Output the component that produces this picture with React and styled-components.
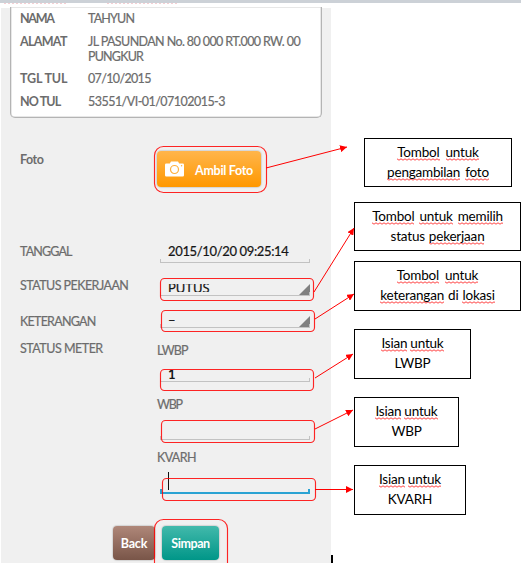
import React from "react";
import styled, { createGlobalStyle } from "styled-components";

const squiggle =
  "url(\"data:image/svg+xml,%3Csvg xmlns='http://www.w3.org/2000/svg' width='4' height='3'%3E%3Cpath d='M0 .8L2 2.2L4 .8' fill='none' stroke='%23ff3030' stroke-width='.9'/%3E%3C/svg%3E\")";

const GlobalStyle = createGlobalStyle`
  * { box-sizing: border-box; }
  body { margin: 0; background: #fff; overflow: hidden; }
`;

const Page = styled.div`
  position: relative;
  width: 521px;
  height: 563px;
  overflow: hidden;
  background: #fff;
  font-family: Lato, "Open Sans", sans-serif;
`;

const TopBar = styled.div`
  height: 3px;
  background: #ccd1d7;
`;

const DotStrip = styled.div`
  display: flex;
  gap: 41px;
  height: 4px;
  padding-left: 4px;
`;

const Dots = styled.i`
  width: ${(p) => p.$w}px;
  height: 1px;
  background: repeating-linear-gradient(90deg, #f5cfd3 0 2px, #fff 2px 4px);
`;

const Columns = styled.main`
  display: flex;
  height: 556px;
`;

const Phone = styled.section`
  width: 330px;
  margin-left: 1px;
  background: linear-gradient(#fff 1px, #f0f0f0 1px);
  color: #6c6c6c;
`;

const Card = styled.div`
  width: 312px;
  height: 111px;
  margin-left: 9px;
  padding: 4px 0 0 9px;
  background: #fff;
  border: 1px solid #b4b4b4;
  border-top: 0;
  border-radius: 0 0 5px 5px;
  box-shadow: inset 0 0 0 0.5px #d0d0d0;
`;

const CardRow = styled.div`
  display: grid;
  grid-template-columns: 68px 1fr;
  height: ${(p) => p.$h}px;
  font-size: 12.5px;
  line-height: 15px;
`;

const Txt = styled.span`
  display: block;
  white-space: nowrap;
  font-weight: ${(p) => p.$weight || 400};
  letter-spacing: ${(p) => p.$ls || 0}px;
  -webkit-text-stroke: ${(p) => (p.$weight ? 0 : 0.2)}px currentColor;
`;

const FormRow = styled.div`
  display: grid;
  grid-template-columns: 137px 1fr;
  height: ${(p) => p.$h}px;
  padding-left: 19px;
  font-size: 12.5px;
  line-height: 16px;
`;

const Label = styled(Txt)`
  margin-top: ${(p) => p.$top}px;
`;

const Button = styled.button`
  display: flex;
  align-items: center;
  justify-content: center;
  width: ${(p) => p.$w}px;
  height: ${(p) => p.$h}px;
  margin: ${(p) => p.$m || 0};
  padding: 0;
  border: 0;
  border-radius: 4px;
  background: linear-gradient(${(p) => p.$from}, ${(p) => p.$to});
  box-shadow: 0 0 1px 1px rgba(110, 110, 110, 0.2);
  color: #fff;
  font: 700 12.5px Lato, sans-serif;
`;

const ButtonText = styled(Txt)`
  margin: ${(p) => (p.$left ? 2 : 0)}px 0 0 ${(p) => p.$left || 0}px;
`;

const Field = styled.div`
  position: relative;
  width: 150px;
  height: ${(p) => p.$h}px;
  margin: ${(p) => p.$top}px 0 0 3px;
  padding-left: 8px;
  border-bottom: ${(p) => (p.$active ? "2px solid #2aa3d3" : "1px solid #c2c2c2")};
  color: #151515;
  font-size: 13px;
  line-height: 16px;

  &::before,
  &::after {
    content: "";
    position: absolute;
    bottom: 0;
    width: ${(p) => (p.$active ? 2 : 1)}px;
    height: 3px;
    background: ${(p) => (p.$active ? "#2aa3d3" : "#c2c2c2")};
  }
  &::before { left: 0; }
  &::after { right: 0; }
`;

const SpinnerMark = styled.i`
  position: absolute;
  right: 0;
  bottom: 0;
  width: 11px;
  height: 11px;
  background: #808080;
  clip-path: polygon(100% 0, 100% 100%, 0 100%);
`;

const Clipped = styled(Txt)`
  margin-top: ${(p) => p.$up}px;
  clip-path: inset(${(p) => p.$cut});
`;

const Caret = styled.i`
  display: block;
  width: 1px;
  height: 18px;
  background: #111;
`;

const Buttons = styled.div`
  display: flex;
  gap: 7px;
  padding: 10px 0 0 112px;
`;

const Notes = styled.aside`
  display: flex;
  flex-direction: column;
  width: 190px;
  padding: 131px 0 0 23px;
`;

const Note = styled.div`
  flex: none;
  width: ${(p) => p.$w}px;
  height: ${(p) => p.$h}px;
  margin: 0 0 ${(p) => p.$gap}px ${(p) => p.$left || 0}px;
  padding-top: 3px;
  border: 1px solid #000;
  color: #000;
  font-size: 13.5px;
  line-height: 20px;
`;

const Line = styled.div`
  display: flex;
  justify-content: center;
  gap: ${(p) => p.$gap || 4}px;
  height: 20px;
  white-space: nowrap;
  letter-spacing: -0.2px;
`;

const Word = styled.span`
  height: 19px;
  background: ${(p) => (p.$plain ? "none" : squiggle)} 0 100% / 4px 3px repeat-x;
`;

const Overlay = styled.svg`
  position: absolute;
  inset: 0;
  pointer-events: none;
`;

const details = [
  { label: "NAMA", ls: -1.3, value: ["TAHYUN"], vls: [-0.8], h: 23 },
  { label: "ALAMAT", ls: -0.7, value: ["JL PASUNDAN No. 80 000 RT.000 RW. 00", "PUNGKUR"], vls: [-0.6, -0.8], h: 37 },
  { label: "TGL TUL", ls: -0.15, value: ["07/10/2015"], vls: [-0.65], h: 23 },
  { label: "NO TUL", ls: -0.9, value: ["53551/VI-01/07102015-3"], vls: [-0.53], h: 20 },
];

const notes = [
  { w: 148, h: 49, gap: 15, left: 10, lines: [["Tombol", "untuk"], ["pengambilan", "foto"]], gaps: [6, 5] },
  { w: 167, h: 49, gap: 10, lines: [["Tombol", "untuk", "memilih"], ["=status", "pekerjaan"]], gaps: [5, 4] },
  { w: 167, h: 50, gap: 18, lines: [["Tombol", "untuk"], ["keterangan", "=di", "lokasi"]], gaps: [6, 4] },
  { w: 117, h: 50, gap: 18, lines: [["Isian", "untuk"], ["=LWBP"]], gaps: [3, 3] },
  { w: 105, h: 50, gap: 18, lines: [["Isian", "untuk"], ["=WBP"]], gaps: [3, 3] },
  { w: 112, h: 50, gap: 0, lines: [["Isian", "untuk"], ["=KVARH"]], gaps: [3, 3] },
];

const outlines = [
  [154.5, 146.5, 112, 46, 9],
  [160.5, 278.5, 153, 22, 4],
  [161.5, 310.5, 153, 21, 4],
  [160.5, 369.5, 153, 21, 4],
  [161.5, 420.5, 153, 22, 4],
  [162.5, 478.5, 153, 22, 4],
  [154.5, 519.5, 73, 60, 9],
];

const arrows = [
  [266, 168, 347, 147],
  [314, 292, 354, 228],
  [315, 319, 354, 294],
  [315, 378, 353, 354],
  [315, 429, 353, 410],
  [315, 489.5, 353, 489.5],
];

function Camera() {
  return (
    <svg width="19" height="16" viewBox="0 0 19 16">
      <path d="M1.3 2.5H4.8L6 .5H13L14.2 2.5H17.7Q19 2.5 19 3.8V14.2Q19 15.5 17.7 15.5H1.3Q0 15.5 0 14.2V3.8Q0 2.5 1.3 2.5Z" fill="#fff" />
      <circle cx="9.5" cy="8.5" r="4" fill="#fff" stroke="#ffb03c" strokeWidth="1.2" />
      <circle cx="16.6" cy="4.8" r=".7" fill="#ffb03c" />
    </svg>
  );
}

function Annotations() {
  return (
    <Overlay width="521" height="563" viewBox="0 0 521 563">
      <defs>
        <marker id="head" markerUnits="userSpaceOnUse" markerWidth="8" markerHeight="7" refX="7" refY="3.5" orient="auto">
          <path d="M0 0L7 3.5L0 7Z" fill="#f00" />
        </marker>
      </defs>
      {outlines.map(([x, y, w, h, r]) => (
        <rect key={y} x={x} y={y} width={w} height={h} rx={r} fill="none" stroke="#f00" strokeOpacity=".85" strokeWidth="1.15" />
      ))}
      {arrows.map(([x1, y1, x2, y2]) => (
        <line key={y1} x1={x1} y1={y1} x2={x2} y2={y2} stroke="#f00" markerEnd="url(#head)" />
      ))}
      <rect x="331" y="555" width="2" height="8" fill="#000" />
    </Overlay>
  );
}

export default function App() {
  return (
    <Page>
      <GlobalStyle />
      <TopBar />
      <DotStrip>
        <Dots $w={62} />
        <Dots $w={70} />
      </DotStrip>
      <Columns>
        <Phone>
          <Card>
            {details.map((d) => (
              <CardRow key={d.label} $h={d.h}>
                <Txt $weight={700} $ls={d.ls}>{d.label}</Txt>
                <div>
                  {d.value.map((v, i) => (
                    <Txt key={v} $ls={d.vls[i]}>{v}</Txt>
                  ))}
                </div>
              </CardRow>
            ))}
          </Card>
          <FormRow $h={118}>
            <Label $top={34} $weight={700} $ls={-0.5}>Foto</Label>
            <Button $w={104} $h={36} $m="33px 0 0" $from="#ffb54b" $to="#ff9800">
              <Camera />
              <ButtonText $left={11} $weight={700} $ls={-0.3}>Ambil Foto</ButtonText>
            </Button>
          </FormRow>
          <FormRow $h={32}>
            <Label $top={8} $ls={-0.85}>TANGGAL</Label>
            <Field $h={20} $top={7}><Txt $ls={-0.35}>2015/10/20 09:25:14</Txt></Field>
          </FormRow>
          <FormRow $h={36}>
            <Label $top={10} $ls={-0.55}>STATUS PEKERJAAN</Label>
            <Field $h={16} $top={12}>
              <Clipped $up={0} $cut="4px 0 4px 0">PUTUS</Clipped>
              <SpinnerMark />
            </Field>
          </FormRow>
          <FormRow $h={36}>
            <Label $top={10} $ls={-0.75}>KETERANGAN</Label>
            <Field $h={16} $top={8}>
              <Txt>–</Txt>
              <SpinnerMark />
            </Field>
          </FormRow>
          <FormRow $h={54}>
            <Label $top={1} $ls={-0.5}>STATUS METER</Label>
            <div>
              <Label $top={3} $ls={-0.9}>LWBP</Label>
              <Field $h={16} $top={11}>
                <Clipped $up={-4} $weight={700} $cut="4px 0 2px 0">1</Clipped>
              </Field>
            </div>
          </FormRow>
          <FormRow $h={54}>
            <span />
            <div>
              <Label $top={3} $ls={-1.2}>WBP</Label>
              <Field $h={16} $top={11} />
            </div>
          </FormRow>
          <FormRow $h={68}>
            <span />
            <div>
              <Label $top={2} $ls={-0.6}>KVARH</Label>
              <Field $h={22} $top={6} $active><Caret /></Field>
            </div>
          </FormRow>
          <Buttons>
            <Button $w={42} $h={34} $from="#af8779" $to="#795548"><ButtonText $weight={700} $ls={-0.2}>Back</ButtonText></Button>
            <Button $w={57} $h={34} $from="#42b9ab" $to="#009688"><ButtonText $weight={700} $ls={-0.4}>Simpan</ButtonText></Button>
          </Buttons>
        </Phone>
        <Notes>
          {notes.map((n, k) => (
            <Note key={k} $w={n.w} $h={n.h} $gap={n.gap} $left={n.left}>
              {n.lines.map((words, i) => (
                <Line key={i} $gap={n.gaps[i]}>
                  {words.map((w) => (
                    <Word key={w} $plain={w[0] === "="}>{w.replace("=", "")}</Word>
                  ))}
                </Line>
              ))}
            </Note>
          ))}
        </Notes>
      </Columns>
      <Annotations />
    </Page>
  );
}
